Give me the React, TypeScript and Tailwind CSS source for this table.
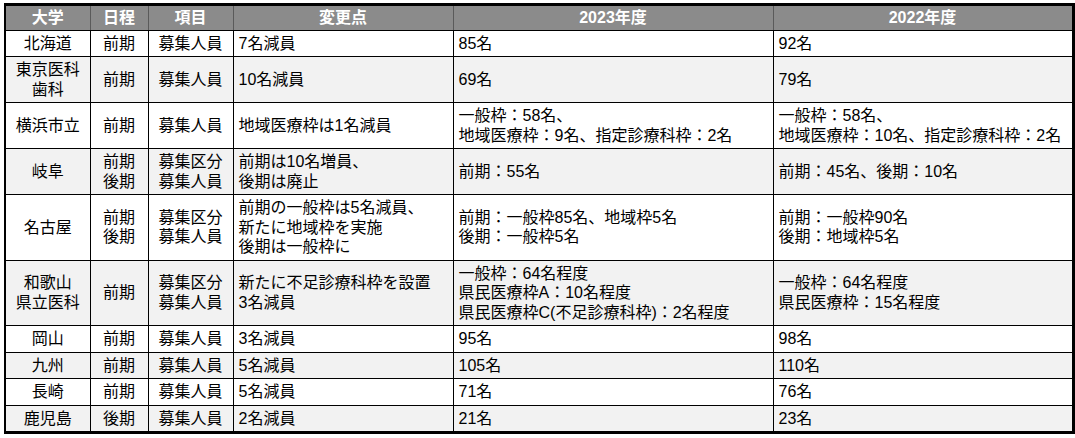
import React from "react";

type Row = {
  univ: string[];
  sched: string[];
  item: string[];
  change: string[];
  y2023: string[];
  y2022: string[];
};

const rows: Row[] = [
  { univ: ["北海道"], sched: ["前期"], item: ["募集人員"], change: ["7名減員"], y2023: ["85名"], y2022: ["92名"] },
  { univ: ["東京医科", "歯科"], sched: ["前期"], item: ["募集人員"], change: ["10名減員"], y2023: ["69名"], y2022: ["79名"] },
  {
    univ: ["横浜市立"],
    sched: ["前期"],
    item: ["募集人員"],
    change: ["地域医療枠は1名減員"],
    y2023: ["一般枠：58名、", "地域医療枠：9名、指定診療科枠：2名"],
    y2022: ["一般枠：58名、", "地域医療枠：10名、指定診療科枠：2名"],
  },
  {
    univ: ["岐阜"],
    sched: ["前期", "後期"],
    item: ["募集区分", "募集人員"],
    change: ["前期は10名増員、", "後期は廃止"],
    y2023: ["前期：55名"],
    y2022: ["前期：45名、後期：10名"],
  },
  {
    univ: ["名古屋"],
    sched: ["前期", "後期"],
    item: ["募集区分", "募集人員"],
    change: ["前期の一般枠は5名減員、", "新たに地域枠を実施", "後期は一般枠に"],
    y2023: ["前期：一般枠85名、地域枠5名", "後期：一般枠5名"],
    y2022: ["前期：一般枠90名", "後期：地域枠5名"],
  },
  {
    univ: ["和歌山", "県立医科"],
    sched: ["前期"],
    item: ["募集区分", "募集人員"],
    change: ["新たに不足診療科枠を設置", "3名減員"],
    y2023: ["一般枠：64名程度", "県民医療枠A：10名程度", "県民医療枠C(不足診療科枠)：2名程度"],
    y2022: ["一般枠：64名程度", "県民医療枠：15名程度"],
  },
  { univ: ["岡山"], sched: ["前期"], item: ["募集人員"], change: ["3名減員"], y2023: ["95名"], y2022: ["98名"] },
  { univ: ["九州"], sched: ["前期"], item: ["募集人員"], change: ["5名減員"], y2023: ["105名"], y2022: ["110名"] },
  { univ: ["長崎"], sched: ["前期"], item: ["募集人員"], change: ["5名減員"], y2023: ["71名"], y2022: ["76名"] },
  { univ: ["鹿児島"], sched: ["後期"], item: ["募集人員"], change: ["2名減員"], y2023: ["21名"], y2022: ["23名"] },
];

function Lines({ lines }: { lines: string[] }) {
  return (
    <>
      {lines.map((l, i) => (
        <div key={i} className="whitespace-nowrap">
          {l}
        </div>
      ))}
    </>
  );
}

const headers = ["大学", "日程", "項目", "変更点", "2023年度", "2022年度"];

export default function App() {
  return (
    <div className="bg-white pl-[4px] pt-[3px] font-['Liberation_Sans','Noto_Sans_CJK_JP',sans-serif] text-[16px] leading-[19.5px] text-black">
      <table className="w-[1068px] table-fixed border-collapse border-t-[3px] border-l-2 border-r-[3px] border-b-[3px] border-black">
        <colgroup>
          <col className="w-[85px]" />
          <col className="w-[58px]" />
          <col className="w-[85px]" />
          <col className="w-[220px]" />
          <col className="w-[320px]" />
          <col className="w-[300px]" />
        </colgroup>
        <thead>
          <tr className="bg-[#8b8b8b]">
            {headers.map((h) => (
              <th
                key={h}
                className="border border-black border-x-[#5a5a5a] py-[2px] text-center font-bold text-white"
              >
                {h}
              </th>
            ))}
          </tr>
        </thead>
        <tbody>
          {rows.map((r, i) => (
            <tr key={i} className={i % 2 === 1 ? "bg-[#f2f2f2]" : "bg-white"}>
              <td className="border border-black py-[3px] text-center align-middle">
                <Lines lines={r.univ} />
              </td>
              <td className="border border-black py-[3px] text-center align-middle">
                <Lines lines={r.sched} />
              </td>
              <td className="border border-black py-[3px] text-center align-middle">
                <Lines lines={r.item} />
              </td>
              <td className="border border-black px-[5px] py-[3px] text-left align-middle">
                <Lines lines={r.change} />
              </td>
              <td className="border border-black px-[5px] py-[3px] text-left align-middle">
                <Lines lines={r.y2023} />
              </td>
              <td className="border border-black px-[5px] py-[3px] text-left align-middle">
                <Lines lines={r.y2022} />
              </td>
            </tr>
          ))}
        </tbody>
      </table>
    </div>
  );
}
